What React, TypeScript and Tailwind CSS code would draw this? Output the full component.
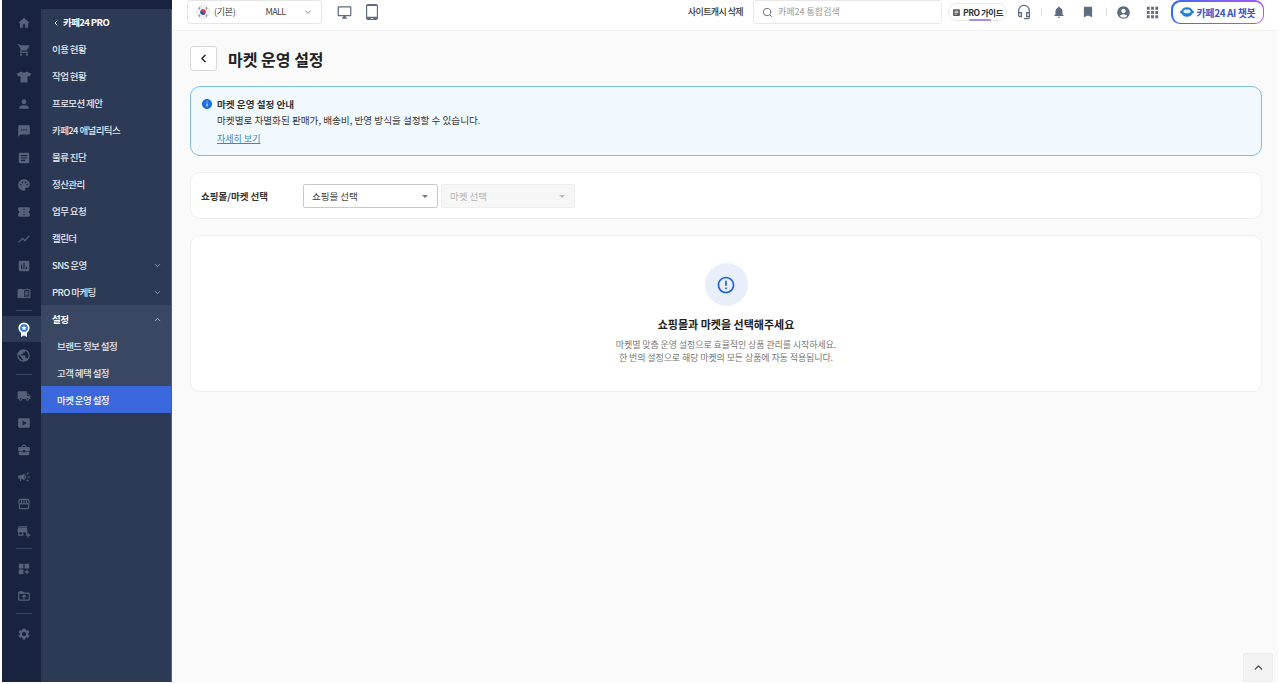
import {
  MdHome, MdShoppingCart, MdPerson, MdTextsms, MdArticle, MdPalette, MdShowChart, MdAssessment,
  MdMenuBook, MdPublic, MdLocalShipping, MdSmartDisplay, MdBusinessCenter,
  MdCampaign, MdStorefront, MdAddBusiness, MdDashboardCustomize, MdDriveFolderUpload, MdSettings,
  MdConfirmationNumber, MdNotifications, MdBookmark, MdAccountCircle, MdApps, MdInfo,
  MdOutlineErrorOutline, MdOutlineDesktopWindows, MdOutlineTabletAndroid, MdOutlineHeadsetMic,
} from 'react-icons/md'
import { FaTshirt } from 'react-icons/fa'
import { ChevronLeft, ChevronDown, ChevronUp, Search } from 'lucide-react'

const font = "font-['Noto_Sans_CJK_KR','Noto_Sans',sans-serif]"

const railTop = [MdHome, MdShoppingCart, FaTshirt, MdPerson, MdTextsms, MdArticle, MdPalette, MdConfirmationNumber, MdShowChart, MdAssessment, MdMenuBook]
const railMid = [MdLocalShipping, MdSmartDisplay, MdBusinessCenter, MdCampaign, MdStorefront, MdAddBusiness]
const railBottom = [MdDashboardCustomize, MdDriveFolderUpload]

const menu = ['이용 현황', '작업 현황', '프로모션 제안', '카페24 애널리틱스', '물류 진단', '정산관리', '업무 요청', '캘린더']

function RailIcon({ Icon, size = 14 }: { Icon: React.ComponentType<{ size?: number; className?: string }>; size?: number }) {
  return (
    <div className="h-[27px] pl-[4px] flex items-center justify-center">
      <Icon size={size} className="text-[#566179]" />
    </div>
  )
}

function RailLine() {
  return <div className="ml-[14px] w-[16px] h-px bg-[#3a4660]" />
}

function Medal() {
  return (
    <svg width="12" height="15" viewBox="0 0 12 15">
      <path d="M3 10v5l3-1.4L9 15v-5z" fill="#e8eefc" />
      <circle cx="6" cy="6" r="5.6" fill="#f4f7ff" />
      <circle cx="6" cy="6" r="3.8" fill="#2f6fe0" />
      <path d="M6 3.4l.8 1.7 1.8.2-1.3 1.2.3 1.8L6 7.4l-1.6.9.3-1.8-1.3-1.2 1.8-.2z" fill="#fff" />
    </svg>
  )
}

function Sidebar() {
  return (
    <aside className="w-[170px] shrink-0 flex flex-col bg-[#18243f]">
      <div className="h-[9px] shrink-0" />
      <div className="flex flex-1 min-h-0">
        <div className="w-[39px] shrink-0 flex flex-col">
          {railTop.map((Icon, i) => <RailIcon key={i} Icon={Icon} />)}
          <div className="h-[4px]" />
          <RailLine />
          <div className="h-[5px]" />
          <div className="h-[26px] pl-[4px] bg-[#2d3a56] flex items-center justify-center">
            <Medal />
          </div>
          <RailIcon Icon={MdPublic} size={15} />
          <div className="h-[5px]" />
          <RailLine />
          <div className="h-[7px]" />
          {railMid.map((Icon, i) => <RailIcon key={i} Icon={Icon} />)}
          <div className="h-[4px]" />
          <RailLine />
          <div className="h-[6px]" />
          {railBottom.map((Icon, i) => <RailIcon key={i} Icon={Icon} />)}
          <div className="h-[4px]" />
          <RailLine />
          <div className="h-[6px]" />
          <RailIcon Icon={MdSettings} />
        </div>
        <nav className="flex-1 bg-[#2d3a56] text-[#e6e9ef] text-[9.5px] font-medium tracking-[-0.6px] border-r border-[#55617a]">
          <div className="h-[26px] pt-px flex items-center pl-[11px] gap-[3px] font-bold text-white">
            <ChevronLeft size={8} strokeWidth={3} />
            <span>카페24 PRO</span>
          </div>
          {menu.map((m) => (
            <div key={m} className="h-[27px] pt-px flex items-center pl-[11px]">{m}</div>
          ))}
          <div className="h-[27px] pt-px flex items-center justify-between pl-[11px] pr-[9px]">
            <span>SNS 운영</span>
            <ChevronDown size={9} strokeWidth={2} className="text-[#aab2c2]" />
          </div>
          <div className="h-[27px] pt-px flex items-center justify-between pl-[11px] pr-[9px]">
            <span>PRO 마케팅</span>
            <ChevronDown size={9} strokeWidth={2} className="text-[#aab2c2]" />
          </div>
          <div className="bg-[#3a4763]">
            <div className="h-[27px] pt-px flex items-center justify-between pl-[11px] pr-[9px] font-bold text-white">
              <span>설정</span>
              <ChevronUp size={9} strokeWidth={2} className="text-[#d5d9e2]" />
            </div>
            <div className="h-[27px] pt-px flex items-center pl-[16px]">브랜드 정보 설정</div>
            <div className="h-[27px] pt-px flex items-center pl-[16px]">고객 혜택 설정</div>
            <div className="h-[27px] pt-px flex items-center pl-[16px] bg-[#3b68dd] text-white">마켓 운영 설정</div>
          </div>
        </nav>
      </div>
    </aside>
  )
}

function Flag() {
  return (
    <svg width="14" height="14" viewBox="0 0 14 14">
      <circle cx="7" cy="7" r="6.5" fill="#f4f4f4" stroke="#e4e4e4" />
      <path d="M4.2 7a2.8 2.8 0 0 1 5.6 0z" fill="#d8304a" transform="rotate(30 7 7)" />
      <path d="M4.2 7a2.8 2.8 0 0 0 5.6 0z" fill="#2a4fa0" transform="rotate(30 7 7)" />
      <path d="M2.6 3.6l1.4-1.2M3 4.4l1.4-1.2M10 2.4l1.4 1.2M9.6 3.2l1.4 1.2M2.6 10.4l1.4 1.2M3 9.6l1.4 1.2M10 11.6l1.4-1.2M9.6 10.8l1.4-1.2" stroke="#333" strokeWidth="0.6" />
    </svg>
  )
}

function Topbar() {
  return (
    <header className="h-[31px] shrink-0 bg-white border-b border-[#f0f0f0] flex items-center pl-[15px] pr-[14px] pb-[6px]">
      <div className="w-[135px] h-[24px] border border-[#e6e6e6] rounded-[3px] flex items-center pl-[8px] pr-[8px] text-[9px] tracking-[-0.3px] text-[#444]">
        <Flag />
        <span className="ml-[4px]">(기본)</span>
        <span className="ml-[30px] tracking-[-0.6px]">MALL</span>
        <ChevronDown size={10} className="ml-auto text-[#777]" />
      </div>
      <MdOutlineDesktopWindows size={15} className="ml-[15px] text-[#5f6b80]" />
      <MdOutlineTabletAndroid size={16} className="ml-[12px] text-[#5f6b80]" />

      <span className="ml-auto text-[9px] font-medium tracking-[-0.6px] text-[#333]">사이트캐시 삭제</span>
      <div className="ml-[10px] w-[189px] h-[24px] border border-[#e8e8e8] rounded-[3px] flex items-center pl-[8px] gap-[5px] text-[9px] text-[#9a9a9a]">
        <Search size={11} className="text-[#666]" />
        <span>카페24 통합검색</span>
      </div>
      <div className="relative ml-[6px] w-[59px] h-[18px] border border-[#e8e8e8] rounded-full flex items-center justify-center gap-[2px] text-[8.5px] font-bold tracking-[-0.5px] text-[#333]">
        <MdArticle size={9} className="text-[#555]" />
        <span>PRO 가이드</span>
        <div className="absolute -bottom-px left-[20px] w-[22px] h-[2px] rounded-full bg-[#a98bf0]" />
      </div>
      <MdOutlineHeadsetMic size={16} className="ml-[9px] text-[#5f6b80]" />
      <div className="ml-[9px] w-px h-[8px] bg-[#ddd]" />
      <MdNotifications size={14} className="ml-[10px] text-[#5f6b80]" />
      <MdBookmark size={14} className="ml-[15px] text-[#5f6b80]" />
      <div className="ml-[11px] w-px h-[8px] bg-[#ddd]" />
      <MdAccountCircle size={15} className="ml-[9px] text-[#5f6b80]" />
      <MdApps size={17} className="ml-[13px] text-[#5f6b80]" />
      <div className="ml-[10px] w-[93px] h-[24px] rounded-[9px] p-[1.5px] bg-gradient-to-r from-[#2b6cf0] to-[#a855f7]">
        <div className="w-full h-full rounded-[8px] bg-white flex items-center justify-center gap-[3px] text-[10px] font-bold tracking-[-0.4px] text-[#3a55c8]">
          <svg width="14" height="12" viewBox="0 0 14 12">
            <ellipse cx="7" cy="6" rx="5.6" ry="4.8" fill="#1f80d8" />
            <rect x="0.2" y="4.5" width="2" height="3" rx="1" fill="#1f80d8" />
            <rect x="11.8" y="4.5" width="2" height="3" rx="1" fill="#1f80d8" />
            <rect x="3.4" y="3.6" width="7.2" height="3.6" rx="1.8" fill="#dff1ff" />
          </svg>
          <span>카페24 AI 챗봇</span>
        </div>
      </div>
    </header>
  )
}

function SelectBox({ label, disabled }: { label: string; disabled?: boolean }) {
  return (
    <div className={`h-[24px] pt-px flex items-center justify-between pl-[8px] pr-[9px] text-[9.5px] rounded-[2px] border ${disabled ? 'w-[134px] bg-[#f6f6f6] border-[#eeeeee] text-[#b5b5b5]' : 'w-[135px] bg-white border-[#c9c9c9] text-[#444]'}`}>
      <span>{label}</span>
      <span className={`w-0 h-0 border-x-[3px] border-x-transparent border-t-[3px] ${disabled ? 'border-t-[#bbb]' : 'border-t-[#777]'}`} />
    </div>
  )
}

export default function App() {
  return (
    <div className={`${font} w-[1280px] h-[684px] overflow-hidden bg-white flex px-[2px] pb-[2px]`}>
      <Sidebar />
      <div className="flex-1 min-w-0 flex flex-col bg-[#fafafa]">
        <Topbar />
        <main className="flex-1 relative pl-[18px] pr-[16px]">
          <div className="h-[55px] flex items-center">
            <button className="w-[27px] h-[25px] bg-white border border-[#d8d8d8] rounded-[3px] flex items-center justify-center text-[#222]">
              <ChevronLeft size={13} strokeWidth={2.5} />
            </button>
            <h1 className="ml-[11px] text-[16px] font-bold text-[#222]">마켓 운영 설정</h1>
          </div>

          <section className="h-[70px] bg-[#f2f9fe] border border-[#7fbdec] rounded-[10px] pl-[10px] pt-[10px] text-[9.6px] text-[#333]">
            <div className="flex items-center gap-[4px] h-[14px]">
              <MdInfo size={12} className="text-[#1a6fd8]" />
              <b className="font-bold text-[#333]">마켓 운영 설정 안내</b>
            </div>
            <p className="ml-[16px] mt-[1px] h-[16px] leading-[16px]">마켓별로 차별화된 판매가, 배송비, 반영 방식을 설정할 수 있습니다.</p>
            <a className="ml-[16px] mt-[4px] inline-block leading-[14px] text-[9px] text-[#3f86bb] underline">자세히 보기</a>
          </section>

          <section className="mt-[16px] h-[47px] bg-white border border-[#f0f0f0] rounded-[10px] flex items-center pl-[10px] gap-[3px]">
            <span className="w-[99px] pt-px text-[9.5px] font-bold text-[#333]">쇼핑몰/마켓 선택</span>
            <SelectBox label="쇼핑몰 선택" />
            <SelectBox label="마켓 선택" disabled />
          </section>

          <section className="mt-[16px] h-[157px] bg-white border border-[#f0f0f0] rounded-[10px] flex flex-col items-center pt-[27px]">
            <div className="w-[43px] h-[43px] rounded-full bg-[#e9eefb] flex items-center justify-center">
              <MdOutlineErrorOutline size={20} className="text-[#1d5fe0]" />
            </div>
            <h2 className="mt-[10px] text-[11px] leading-[16px] font-bold text-[#222]">쇼핑몰과 마켓을 선택해주세요</h2>
            <p className="mt-[6px] text-[9px] tracking-[-0.1px] leading-[13px] text-[#777] text-center">
              마켓별 맞춤 운영 설정으로 효율적인 상품 관리를 시작하세요.
              <br />
              한 번의 설정으로 해당 마켓의 모든 상품에 자동 적용됩니다.
            </p>
          </section>

          <button className="absolute right-[5px] bottom-0 w-[30px] h-[29px] bg-[#f3f3f3] border border-[#ececec] rounded-[2px] flex items-center justify-center text-[#444]">
            <ChevronUp size={13} strokeWidth={2.5} />
          </button>
        </main>
      </div>
    </div>
  )
}
